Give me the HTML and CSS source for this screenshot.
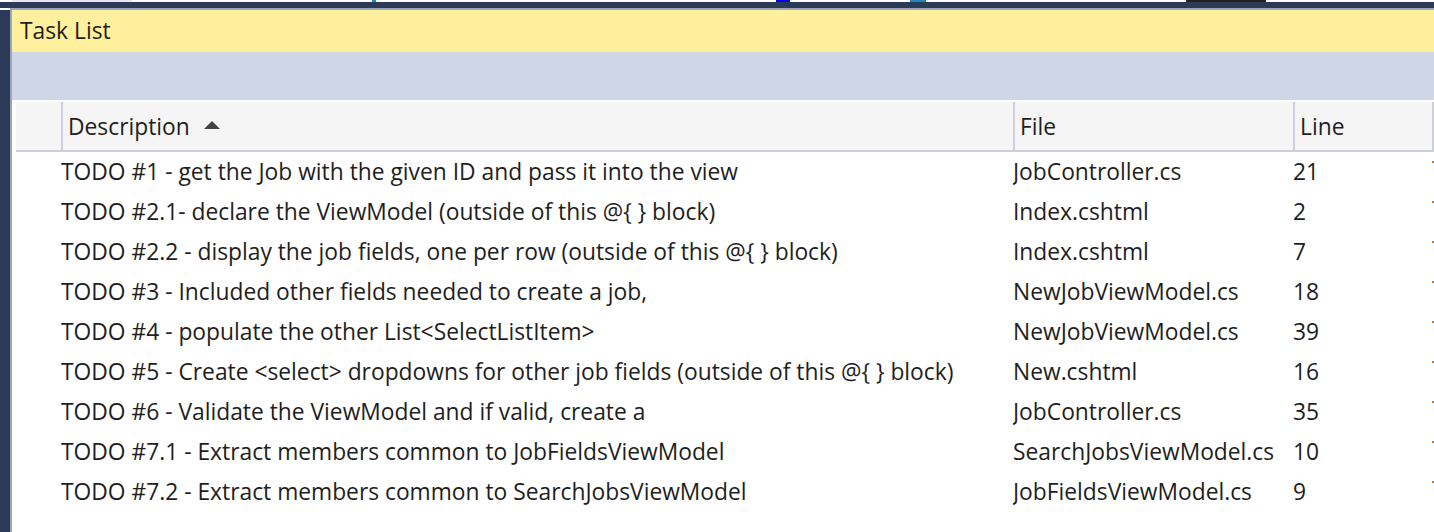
FILE: index.html
```html
<!DOCTYPE html>
<html lang="en">
<head>
<meta charset="utf-8">
<title>Task List</title>
<link rel="stylesheet" href="styles.css">
</head>
<body>
<div class="topstrip">
  <span class="frag f1"></span><span class="frag f2"></span><span class="frag f3"></span><span class="frag f4"></span><span class="frag f5"></span>
</div>
<div class="navbar"></div>
<div class="navline"></div>
<div class="frame">
  <div class="sideborder"></div>
  <div class="panel">
    <div class="titlebar">Task List</div>
    <div class="toolbar"></div>
    <div class="list">
      <div class="header grid">
        <div class="hcell first"></div>
        <div class="hcell">Description <span class="sort"></span></div>
        <div class="hcell">File</div>
        <div class="hcell">Line</div>
        <div class="hcell last"></div>
      </div>
      <div class="row grid"><div></div><div class="cell">TODO #1 - get the Job with the given ID and pass it into the view</div><div class="cell">JobController.cs</div><div class="cell">21</div><div class="mark"></div></div>
      <div class="row grid"><div></div><div class="cell">TODO #2.1- declare the ViewModel (outside of this @{ } block)</div><div class="cell">Index.cshtml</div><div class="cell">2</div><div class="mark"></div></div>
      <div class="row grid"><div></div><div class="cell">TODO #2.2 - display the job fields, one per row (outside of this @{ } block)</div><div class="cell">Index.cshtml</div><div class="cell">7</div><div class="mark"></div></div>
      <div class="row grid"><div></div><div class="cell">TODO #3 - Included other fields needed to create a job,</div><div class="cell">NewJobViewModel.cs</div><div class="cell">18</div><div class="mark"></div></div>
      <div class="row grid"><div></div><div class="cell">TODO #4 - populate the other List&lt;SelectListItem&gt;</div><div class="cell">NewJobViewModel.cs</div><div class="cell">39</div><div class="mark"></div></div>
      <div class="row grid"><div></div><div class="cell">TODO #5 - Create &lt;select&gt; dropdowns for other job fields (outside of this @{ } block)</div><div class="cell">New.cshtml</div><div class="cell">16</div><div class="mark"></div></div>
      <div class="row grid"><div></div><div class="cell">TODO #6 - Validate the ViewModel and if valid, create a</div><div class="cell">JobController.cs</div><div class="cell">35</div><div class="mark"></div></div>
      <div class="row grid"><div></div><div class="cell">TODO #7.1 - Extract members common to JobFieldsViewModel</div><div class="cell">SearchJobsViewModel.cs</div><div class="cell">10</div><div class="mark"></div></div>
      <div class="row grid"><div></div><div class="cell">TODO #7.2 - Extract members common to SearchJobsViewModel</div><div class="cell">JobFieldsViewModel.cs</div><div class="cell">9</div><div class="mark"></div></div>
    </div>
  </div>
</div>
</body>
</html>
```
FILE: styles.css
```css
* { box-sizing: border-box; }
html, body { margin: 0; padding: 0; background: #ffffff; overflow: hidden; }
body {
  width: 1434px;
  height: 532px;
  font-family: "Open Sans", "Noto Sans", sans-serif;
  font-size: 22.8px;
  color: #1e1e1e;
}
.topstrip {
  height: 2px;
  background: #ffffff;
  display: flex;
}
.frag { height: 2px; display: block; }
.f1 { width: 120px; margin-left: 12px; background: #e8e8ee; }
.f2 { width: 4px; margin-left: 240px; background: #1d8ad0; }
.f3 { width: 14px; margin-left: 400px; background: #0000ff; }
.f4 { width: 16px; margin-left: 120px; background: #1e87b8; }
.f5 { width: 80px; margin-left: 260px; background: #222222; }
.navbar { height: 6px; background: #2b3a56; }
.navline { height: 2px; background: #9ba5bb; margin-left: 10px; }
.frame {
  display: flex;
  height: 522px;
}
.sideborder {
  width: 12px;
  flex: none;
  background: #2b3a56;
  border-right: 2px solid #9ba5bb;
}
.panel {
  flex: 1;
  display: flex;
  flex-direction: column;
}
.titlebar {
  height: 42px;
  background: #fff09d;
  padding-left: 8px;
  line-height: 42px;
  color: #1e1e1e;
}
.toolbar {
  height: 48px;
  background: #cfd6e5;
}
.list {
  flex: 1;
  padding: 2px 0 0 4px;
  background: #ffffff;
}
.grid {
  display: grid;
  grid-template-columns: 45px 952px 280px 139px 2px;
}
.header {
  height: 50px;
  background: #f5f5f5;
  border-bottom: 2px solid #cccedb;
}
.hcell {
  border-left: 2px solid #cccedb;
  padding-left: 5px;
  display: flex;
  align-items: center;
  white-space: nowrap;
}
.hcell.first { border-left: none; }
.hcell.last { padding: 0; background: #cccedb; border: none; }
.sort {
  display: inline-block;
  width: 0;
  height: 0;
  margin-left: 14px;
  border-left: 8px solid transparent;
  border-right: 8px solid transparent;
  border-bottom: 8px solid #444444;
  margin-bottom: 2px;
}
.row {
  height: 40px;
  align-items: center;
  padding-bottom: 2px;
}
.cell {
  white-space: nowrap;
  overflow: hidden;
}
.mark {
  width: 2px;
  height: 2px;
  background: #c0773a;
  align-self: start;
  margin-top: 9px;
}
```
